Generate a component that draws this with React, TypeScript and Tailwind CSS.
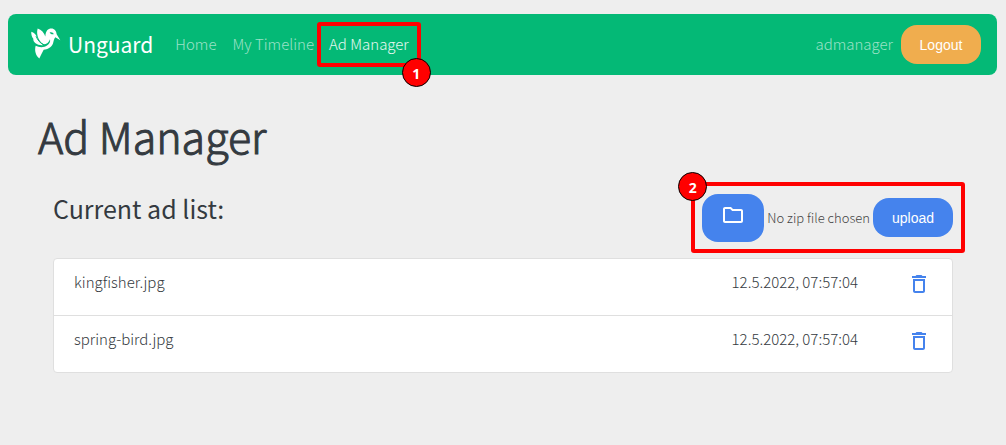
import type { ReactNode } from 'react';
import { MdOutlineFolder, MdDeleteOutline } from 'react-icons/md';

const ads = [
  { name: 'kingfisher.jpg', date: '12.5.2022, 07:57:04' },
  { name: 'spring-bird.jpg', date: '12.5.2022, 07:57:04' },
];

function Hummingbird() {
  return (
    <svg viewBox="0 0 90 92" className="h-[31px] w-[30px]" fill="#fff" aria-hidden="true">
      <path d="M20 1 C31 5 40 14 43 25 C44 8 51 1 61 1 C70 1 76 8 77 18 L88 36 L73 27 C69 31 68 38 66 46 C61 59 49 63 38 65 C34 73 30 81 25 91 C14 82 10 68 14 53 C24 58 39 59 48 52 C55 47 59 40 57 33 C54 42 47 48 38 48 C25 42 14 20 20 1 Z" />
      <path d="M1 11 C9 13 13 18 17 25 C21 38 28 45 37 51 C22 54 5 43 7 32 C2 26 0 18 1 11 Z" />
      <path d="M15 24 C20 36 28 46 39 50" fill="none" stroke="#04b976" strokeWidth="3" />
      <path d="M56 13 C61 11 67 13 68 18 C63 19 58 18 56 13 Z" fill="#04b976" />
    </svg>
  );
}

function Callout({ children, className }: { children: ReactNode; className: string }) {
  return (
    <span
      className={`absolute flex size-[29px] items-center justify-center rounded-full border border-black bg-[#f00] pt-0.5 font-['Open_Sans',sans-serif] text-sm font-bold text-white ${className}`}
    >
      {children}
    </span>
  );
}

export default function App() {
  return (
    <div className="min-h-screen bg-[#eee] px-2 pt-3.5 pb-16 font-['Noto_Sans_CJK_SC',sans-serif] text-[15px] leading-6 font-light text-[#343a40]">
      <nav className="mr-px flex h-[61px] items-center rounded-lg bg-[#04b976] pr-4 pl-[23px] text-white/60">
        <a href="#home" className="flex items-center gap-[7px] pb-0.5 text-[21px] font-normal text-white">
          <Hummingbird />
          Unguard
        </a>
        <a href="#home" className="ml-[22px] pb-0.5">Home</a>
        <a href="#timeline" className="ml-4 pb-0.5">My Timeline</a>
        <div className="relative ml-[3px] flex h-[45px] items-center rounded-[3px] border-4 border-[#f00] px-2">
          <a href="#ads" className="pb-0.5 text-white/90">Ad Manager</a>
          <Callout className="-right-3.5 -bottom-6">1</Callout>
        </div>
        <a href="#profile" className="ml-auto pb-0.5">admanager</a>
        <button className="ml-2 h-[39px] w-20 rounded-2xl bg-[#f0ad4e] font-['Liberation_Sans',sans-serif] text-sm font-normal text-white">
          Logout
        </button>
      </nav>

      <main className="px-[30px] pt-[30px]">
        <h1 className="text-[43px] leading-[60px] font-light [-webkit-text-stroke:1px_#343a40]">Ad Manager</h1>
        <div className="flex items-start justify-between pt-[17px] pr-[3px] pl-[15px]">
          <h2 className="pt-2 text-[25px] leading-9 font-normal">Current ad list:</h2>
          <form className="relative flex h-[71px] items-center gap-[3px] rounded-[3px] border-4 border-[#f00] pr-2 pl-[7px]">
            <button type="button" aria-label="Choose zip file" className="flex h-12 w-[62px] items-start justify-center rounded-2xl bg-[#4583ed] pt-[9px] text-white">
              <MdOutlineFolder size={24} />
            </button>
            <span className="text-[13px] text-[#444]">No zip file chosen</span>
            <button type="button" className="h-[39px] w-20 rounded-2xl bg-[#4583ed] font-['Liberation_Sans',sans-serif] text-sm font-normal text-white">
              upload
            </button>
            <Callout className="-top-3.5 -left-[17px]">2</Callout>
          </form>
        </div>

        <ul className="mx-[15px] mt-[5px] divide-y divide-[#dfdfdf] rounded border border-[#dfdfdf] bg-white">
          {ads.map((ad) => (
            <li key={ad.name} className="box-content flex h-[45px] items-start pt-[11px] pr-[21px] pl-5">
              <span className="flex-1">{ad.name}</span>
              <time>{ad.date}</time>
              <button aria-label={`Delete ${ad.name}`} className="ml-[49px] pt-0.5 text-[#4583ed]">
                <MdDeleteOutline size={24} />
              </button>
            </li>
          ))}
        </ul>
      </main>
    </div>
  );
}
